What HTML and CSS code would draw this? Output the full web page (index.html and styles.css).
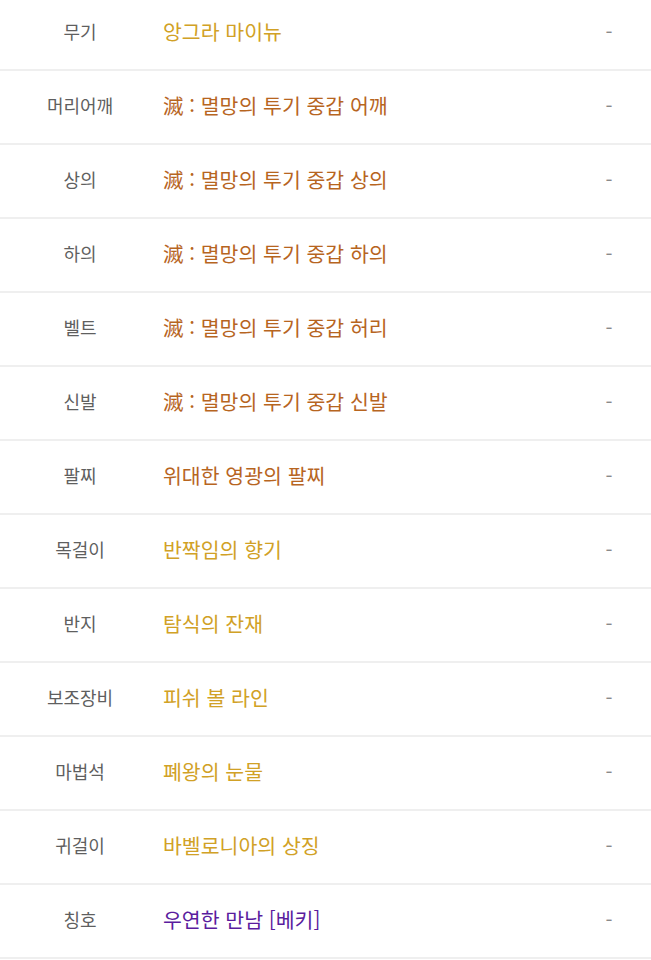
FILE: index.html
```html
<!DOCTYPE html>
<html lang="ko">
<head>
    <meta charset="UTF-8">
    <meta name="viewport" content="width=device-width, initial-scale=1.0">
    <title>장비</title>
    <link rel="stylesheet" href="styles.css">
</head>
<body>
    <div class="equip-list">
        <div class="equip-row">
            <div class="slot">무기</div>
            <div class="item unique">앙그라 마이뉴</div>
            <div class="extra">-</div>
        </div>
        <div class="equip-row">
            <div class="slot">머리어깨</div>
            <div class="item epic">滅 : 멸망의 투기 중갑 어깨</div>
            <div class="extra">-</div>
        </div>
        <div class="equip-row">
            <div class="slot">상의</div>
            <div class="item epic">滅 : 멸망의 투기 중갑 상의</div>
            <div class="extra">-</div>
        </div>
        <div class="equip-row">
            <div class="slot">하의</div>
            <div class="item epic">滅 : 멸망의 투기 중갑 하의</div>
            <div class="extra">-</div>
        </div>
        <div class="equip-row">
            <div class="slot">벨트</div>
            <div class="item epic">滅 : 멸망의 투기 중갑 허리</div>
            <div class="extra">-</div>
        </div>
        <div class="equip-row">
            <div class="slot">신발</div>
            <div class="item epic">滅 : 멸망의 투기 중갑 신발</div>
            <div class="extra">-</div>
        </div>
        <div class="equip-row">
            <div class="slot">팔찌</div>
            <div class="item epic">위대한 영광의 팔찌</div>
            <div class="extra">-</div>
        </div>
        <div class="equip-row">
            <div class="slot">목걸이</div>
            <div class="item unique">반짝임의 향기</div>
            <div class="extra">-</div>
        </div>
        <div class="equip-row">
            <div class="slot">반지</div>
            <div class="item unique">탐식의 잔재</div>
            <div class="extra">-</div>
        </div>
        <div class="equip-row">
            <div class="slot">보조장비</div>
            <div class="item unique">피쉬 볼 라인</div>
            <div class="extra">-</div>
        </div>
        <div class="equip-row">
            <div class="slot">마법석</div>
            <div class="item unique">폐왕의 눈물</div>
            <div class="extra">-</div>
        </div>
        <div class="equip-row">
            <div class="slot">귀걸이</div>
            <div class="item unique">바벨로니아의 상징</div>
            <div class="extra">-</div>
        </div>
        <div class="equip-row">
            <div class="slot">칭호</div>
            <div class="item rare">우연한 만남 [베키]</div>
            <div class="extra">-</div>
        </div>
    </div>
</body>
</html>
```

FILE: styles.css
```css
body {
    margin: 0;
    background-color: #fff;
    font-family: "Noto Sans CJK KR", "Noto Sans", sans-serif;
}
.equip-list {
    margin-top: -3px;
}
.equip-row {
    display: grid;
    grid-template-columns: 160px 1fr 84px;
    align-items: center;
    height: 68px;
    padding-bottom: 4px;
    border-bottom: 2px solid #efefef;
}
.slot {
    text-align: center;
    font-size: 18px;
    color: #5f5f5f;
}
.item {
    padding-left: 3px;
    font-size: 20.5px;
    font-weight: 400;
}
.item.unique {
    color: #d1a126;
}
.item.epic {
    color: #b7651f;
}
.item.rare {
    color: #5a1c9e;
}
.extra {
    text-align: center;
    font-size: 20px;
    color: #8a8a8a;
}
```
